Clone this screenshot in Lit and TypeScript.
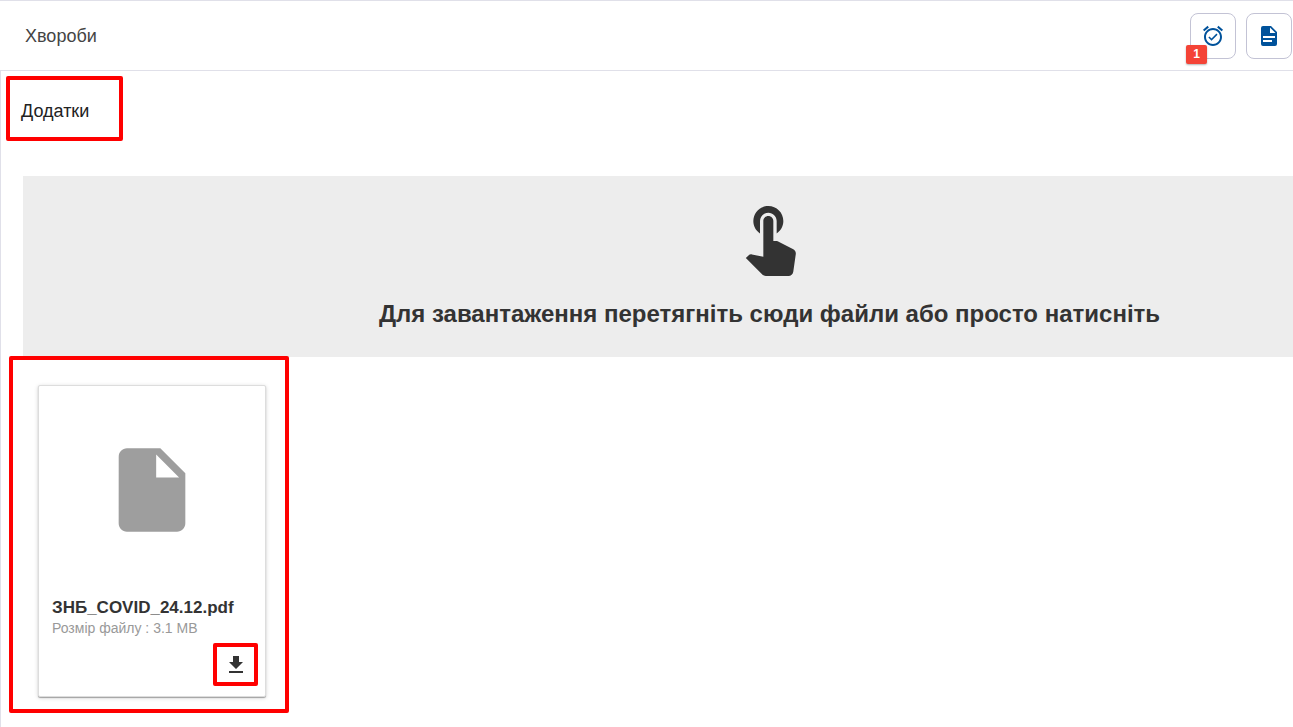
import { LitElement, html, css } from "lit";
import { customElement } from "lit/decorators.js";

@customElement("app-root")
export class AppRoot extends LitElement {
  static styles = css`
    :host {
      display: block;
      min-height: 100vh;
      box-sizing: border-box;
      overflow: hidden;
      background: #fff;
      color: #333;
      font-family: "Liberation Sans", Arial, sans-serif;
    }
    * { box-sizing: border-box; }
    h1, h2, h3, p { margin: 0; }
    button { font: inherit; color: inherit; cursor: pointer; padding: 0; }
    svg { display: block; fill: currentColor; }
    .page { display: flex; flex-direction: column; min-height: 100vh; }
    .header {
      display: flex;
      align-items: center;
      justify-content: space-between;
      height: 71px;
      padding: 0 1px 0 25px;
      border-top: 1px solid #e0e0e9;
      border-bottom: 1px solid #e0e0e9;
    }
    .title { font-size: 18px; line-height: 24px; font-weight: 400; color: #444; }
    .actions { display: flex; gap: 10px; }
    .action {
      position: relative;
      display: grid;
      place-items: center;
      width: 46px;
      height: 46px;
      border: 1px solid #c3c3d5;
      border-radius: 8px;
      background: #fff;
      color: #00529b;
    }
    .badge {
      position: absolute;
      left: -5px;
      bottom: -6px;
      width: 21px;
      height: 19px;
      border-radius: 2px;
      background: #f44336;
      color: #fff;
      font-size: 12px;
      line-height: 18px;
      font-weight: 700;
      text-align: center;
      box-shadow: 0 1px 2px rgba(0, 0, 0, 0.3);
    }
    .content { flex: 1; border-left: 1px solid #e0e0e9; padding: 5px 0 12px 5px; }
    .mark { border: 4px solid #f00; border-radius: 2px; }
    .section { width: 117px; height: 65px; padding: 19px 11px; }
    .section-title { font-size: 18px; line-height: 24px; font-weight: 400; color: #222; }
    .dropzone {
      display: flex;
      flex-direction: column;
      align-items: center;
      width: calc(100% - 17px);
      height: 181px;
      margin: 35px 0 0 17px;
      padding: 20px 0 0 223px;
      border: 0;
      background: #ededed;
    }
    .drop-text {
      margin-top: 24px;
      font-size: 24px;
      line-height: 28px;
      font-weight: 700;
      white-space: nowrap;
    }
    .file { width: 280px; margin: -1px 0 0 3px; padding: 25px 19px 12px 25px; position: relative; }
    .card {
      display: flex;
      flex-direction: column;
      height: 312px;
      padding: 54px 7px 10px 13px;
      border: 1px solid #ddd;
      border-radius: 2px;
      background: #fff;
      box-shadow: 0 1px 1px rgba(0, 0, 0, 0.3), 0 1px 4px rgba(0, 0, 0, 0.16);
    }
    .preview { display: flex; justify-content: center; padding-right: 6px; color: #9e9e9e; }
    .name { margin-top: 58px; font-size: 17px; line-height: 20px; font-weight: 700; }
    .size { font-size: 14px; line-height: 20px; color: #999; }
    .download {
      display: grid;
      place-items: center;
      align-self: flex-end;
      width: 45px;
      height: 44px;
      margin-top: 5px;
      background: none;
    }
  `;

  private icon(path: string, size: number) {
    return html`<svg width=${size} height=${size} viewBox="0 0 24 24" aria-hidden="true"><path d=${path}></path></svg>`;
  }

  render() {
    return html`
      <div class="page">
        <header class="header">
          <h1 class="title">Хвороби</h1>
          <div class="actions">
            <button class="action">
              ${this.icon("M22 5.72l-4.6-3.86-1.29 1.53 4.6 3.86L22 5.72zM7.88 3.39L6.6 1.86 2 5.71l1.29 1.53 4.59-3.85zM12 4c-4.97 0-9 4.03-9 9s4.02 9 9 9c4.97 0 9-4.03 9-9s-4.03-9-9-9zm0 16c-3.87 0-7-3.13-7-7s3.13-7 7-7 7 3.13 7 7-3.13 7-7 7zm-1.46-5.47L8.41 12.4l-1.06 1.06 3.18 3.18 6-6-1.06-1.06-4.93 4.95z", 24)}
              <span class="badge">1</span>
            </button>
            <button class="action">
              ${this.icon("M6 2a2 2 0 0 0-2 2v16a2 2 0 0 0 2 2h12a2 2 0 0 0 2-2V8l-6-6H6zm7 1.5L18.5 9H13V3.5zM6 12h12v2H6v-2zm0 4h9v2H6v-2z", 24)}
            </button>
          </div>
        </header>
        <main class="content">
          <div class="section mark"><h2 class="section-title">Додатки</h2></div>
          <button class="dropzone">
            ${this.icon("M9 11.24V7.5C9 6.12 10.12 5 11.5 5S14 6.12 14 7.5v3.74c1.21-.81 2-2.18 2-3.74C16 5.01 13.99 3 11.5 3S7 5.01 7 7.5c0 1.56.79 2.93 2 3.74zm9.84 4.63l-4.54-2.26c-.17-.07-.35-.11-.54-.11H13v-6c0-.83-.67-1.5-1.5-1.5S10 6.67 10 7.5v10.74l-3.43-.72c-.08-.01-.15-.03-.24-.03-.31 0-.59.13-.79.33l-.79.8 4.94 4.94c.27.27.65.44 1.06.44h6.79c.75 0 1.33-.55 1.44-1.28l.75-5.27c.01-.07.02-.14.02-.2 0-.62-.38-1.16-.91-1.38z", 80)}
            <span class="drop-text">Для завантаження перетягніть сюди файли або просто натисніть</span>
          </button>
          <section class="file mark">
            <article class="card">
              <div class="preview">
                ${this.icon("M6 2c-1.1 0-1.99.9-1.99 2L4 20c0 1.1.89 2 1.99 2H18c1.1 0 2-.9 2-2V8l-6-6H6zm7 7V3.5L18.5 9H13z", 100)}
              </div>
              <h3 class="name">ЗНБ_COVID_24.12.pdf</h3>
              <p class="size">Розмір файлу : 3.1 MB</p>
              <button class="download mark">
                ${this.icon("M5 20h14v-2H5v2zM19 9h-4V3H9v6H5l7 7 7-7z", 24)}
              </button>
            </article>
          </section>
        </main>
      </div>
    `;
  }
}
